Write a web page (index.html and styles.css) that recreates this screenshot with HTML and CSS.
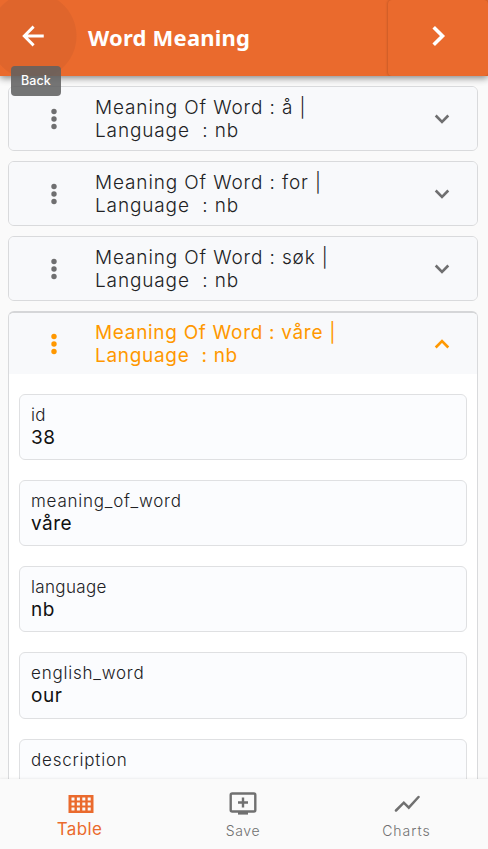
FILE: index.html
```html
<!DOCTYPE html>
<html lang="en">
<head>
<meta charset="utf-8">
<title>Word Meaning</title>
<link rel="stylesheet" href="styles.css">
</head>
<body>
<div class="app">
  <header class="bar">
    <div class="back">
      <svg width="30" height="30" viewBox="0 0 24 24"><path d="M20.600 12H5.200M12.500 4.500 5 12l7.500 7.500" fill="none" stroke="currentColor" stroke-width="2.300"/></svg>
      <span class="tip">Back</span>
    </div>
    <h1 class="title">Word Meaning</h1>
    <div class="next">
      <svg width="100" height="76" viewBox="0 0 100 76"><path d="M45.700 27.200 54.500 36l-8.800 8.800" fill="none" stroke="currentColor" stroke-width="3.600"/></svg>
    </div>
  </header>
  <main class="list">
    <section class="card">
      <div class="head">
        <svg class="dots" width="8" height="24" viewBox="0 0 8 24"><circle cx="4" cy="4.500" r="2.700"/><circle cx="4" cy="12" r="2.700"/><circle cx="4" cy="19.500" r="2.700"/></svg>
        <p class="word"><span class="line">Meaning Of Word : å |</span><span class="line">Language&nbsp; : nb</span></p>
        <svg class="chev" width="18" height="12" viewBox="0 0 18 12"><path d="m2.700 2.500 6.300 6.300 6.300-6.300"/></svg>
      </div>
    </section>
    <section class="card">
      <div class="head">
        <svg class="dots" width="8" height="24" viewBox="0 0 8 24"><circle cx="4" cy="4.500" r="2.700"/><circle cx="4" cy="12" r="2.700"/><circle cx="4" cy="19.500" r="2.700"/></svg>
        <p class="word"><span class="line">Meaning Of Word : for |</span><span class="line">Language&nbsp; : nb</span></p>
        <svg class="chev" width="18" height="12" viewBox="0 0 18 12"><path d="m2.700 2.500 6.300 6.300 6.300-6.300"/></svg>
      </div>
    </section>
    <section class="card">
      <div class="head">
        <svg class="dots" width="8" height="24" viewBox="0 0 8 24"><circle cx="4" cy="4.500" r="2.700"/><circle cx="4" cy="12" r="2.700"/><circle cx="4" cy="19.500" r="2.700"/></svg>
        <p class="word"><span class="line">Meaning Of Word : søk |</span><span class="line">Language&nbsp; : nb</span></p>
        <svg class="chev" width="18" height="12" viewBox="0 0 18 12"><path d="m2.700 2.500 6.300 6.300 6.300-6.300"/></svg>
      </div>
    </section>
    <section class="card open">
      <div class="head">
        <svg class="dots" width="8" height="24" viewBox="0 0 8 24"><circle cx="4" cy="4.500" r="2.700"/><circle cx="4" cy="12" r="2.700"/><circle cx="4" cy="19.500" r="2.700"/></svg>
        <p class="word"><span class="line">Meaning Of Word : våre |</span><span class="line">Language&nbsp; : nb</span></p>
        <svg class="chev" width="18" height="12" viewBox="0 0 18 12"><path d="m2.700 9.500 6.300-6.300 6.300 6.300"/></svg>
      </div>
      <dl class="fields">
        <div class="field"><dt>id</dt><dd>38</dd></div>
        <div class="field"><dt class="wide">meaning_of_word</dt><dd>våre</dd></div>
        <div class="field"><dt>language</dt><dd>nb</dd></div>
        <div class="field"><dt class="wide">english_word</dt><dd>our</dd></div>
        <div class="field"><dt class="wide">description</dt><dd></dd></div>
      </dl>
    </section>
  </main>
  <nav class="tabs">
    <div class="tab active">
      <svg width="26" height="18" viewBox="0 0 26 18"><path fill="currentColor" fill-rule="evenodd" d="M.5 0h25v18H.5zM3.500 2.500v3h3v-3zm5.400 0v3h3v-3zm5.400 0v3h3v-3zm5.400 0v3h3v-3zM3.500 7.500v3h3v-3zm5.400 0v3h3v-3zm5.400 0v3h3v-3zm5.400 0v3h3v-3zM3.500 12.500v3h3v-3zm5.400 0v3h3v-3zm5.400 0v3h3v-3zm5.400 0v3h3v-3z"/></svg>
      <span>Table</span>
    </div>
    <div class="tab">
      <svg width="28" height="23" viewBox="0 0 28 23"><rect x="1.700" y="1.500" width="24.600" height="18" rx="1.500" fill="none" stroke="currentColor" stroke-width="2.400"/><path d="M9 20h10v2.600H9z" fill="currentColor"/><path d="M14 5.500v10M9 10.500h10" stroke="currentColor" stroke-width="2.400"/></svg>
      <span>Save</span>
    </div>
    <div class="tab charts">
      <svg width="26" height="18" viewBox="0 0 26 18"><path d="m2 15.500 7.800-7.800 5 5L24.500 2" fill="none" stroke="currentColor" stroke-width="2.500" stroke-linecap="round"/></svg>
      <span>Charts</span>
    </div>
  </nav>
</div>
</body>
</html>
```
FILE: styles.css
```css
* { box-sizing: border-box; }
body, h1, p, dl, dd { margin: 0; }
body { background: #fafafa; font-family: Inter, "Liberation Sans", sans-serif; }
svg { display: block; }
.app { height: 849px; display: flex; flex-direction: column; overflow: hidden; }
.bar { position: relative; z-index: 2; flex: none; height: 76px; display: flex; background: #ea6a2d; color: #fff; box-shadow: 0 2px 7px rgba(0,0,0,.48); }
.back { position: relative; width: 88px; padding: 21px 0 0 18px; background: radial-gradient(circle at 33px 36px, #df652c 43px, transparent 44px); }
.tip { position: absolute; left: 11px; top: 66px; width: 50px; height: 30px; border-radius: 4px; background: rgba(97,97,97,.87); text-align: center; font-size: 12.500px; line-height: 30px; font-weight: 500; letter-spacing: .1px; }
.title { flex: 1; font-family: "Noto Sans", sans-serif; font-size: 22px; line-height: 74px; font-weight: 700; letter-spacing: .2px; white-space: nowrap; }
.next { width: 100px; border-radius: 4px; box-shadow: 0 0 3px rgba(0,0,0,.28); clip-path: inset(0 0 0 -5px); }
.list { flex: 1; min-height: 0; overflow: hidden; padding: 10px 10px 0 8px; display: flex; flex-direction: column; gap: 10px; }
.card { flex: none; border: 1px solid #d9dadc; border-radius: 6px; background: #f8f9fb; overflow: hidden; color: #212224; }
.head { height: 63px; display: flex; align-items: center; padding: 0 26px 0 41.400px; background: #f8f9fb; }
.dots { fill: #6f6f70; }
.word { flex: 1; padding-left: 36.600px; font-size: 19px; line-height: 23px; font-weight: 300; }
.line { display: block; white-space: nowrap; letter-spacing: .87px; }
.chev { fill: none; stroke: #6f6f70; stroke-width: 2.600; }
.open { background: #fff; border-top: 2px solid #d5d6d8; }
.open .head { height: 61px; color: #ff9800; }
.open .word { font-weight: 400; }
.open .line { letter-spacing: .69px; }
.open .dots { fill: #ff9800; }
.open .chev { stroke: #ff9800; }
.fields { padding: 19.600px 10px; display: flex; flex-direction: column; gap: 20px; }
.field { height: 66.300px; border: 1px solid #dfe0e2; border-radius: 6px; background: #fbfcfe; padding: 9px 11px; }
.field dt { font-size: 17px; line-height: 23px; font-weight: 300; letter-spacing: .35px; color: #202124; }
.field .wide { letter-spacing: .78px; }
.field dd { font-size: 19px; line-height: 22px; font-weight: 370; letter-spacing: .5px; color: #111; }
.tabs { position: relative; z-index: 2; flex: none; height: 70px; display: flex; justify-content: space-between; background: #fafafa; color: #707070; box-shadow: 0 -1px 2px rgba(0,0,0,.06); }
.tab { width: 162px; display: flex; flex-direction: column; align-items: center; font-size: 14px; line-height: 20px; font-weight: 300; letter-spacing: .6px; padding: 13px 2px 0 0; }
.tab span { margin-top: 6px; }
.active { padding: 16px 3px 0 0; color: #ea6a2d; font-size: 17px; font-weight: 400; letter-spacing: .4px; }
.active svg { margin-left: 2px; }
.charts { padding: 16px 1px 0 0; letter-spacing: 1px; }
.charts span { margin-top: 8px; }
```
